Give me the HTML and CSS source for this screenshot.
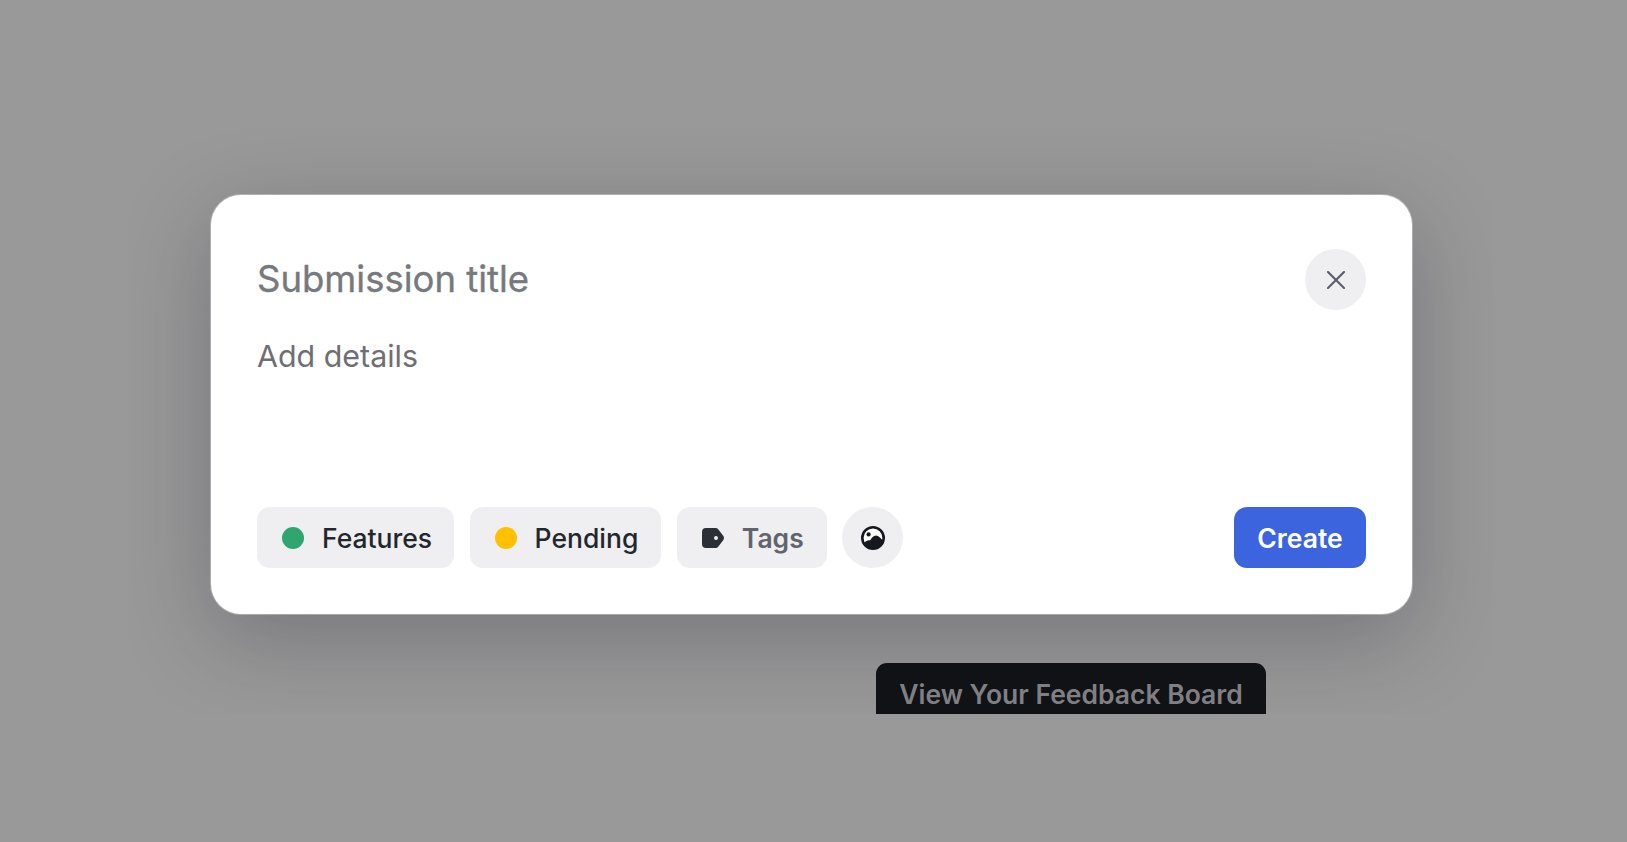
FILE: index.html
```html
<!DOCTYPE html>
<html lang="en">
<head>
<meta charset="utf-8">
<title>Create submission</title>
<link rel="stylesheet" href="styles.css">
</head>
<body>
<div class="overlay">
  <section class="modal">
    <header class="modal-head">
      <h1 class="title">Submission title</h1>
      <button class="close" aria-label="Close">
        <svg width="18" height="18" viewBox="0 0 18 18" fill="none" stroke="#5a5d66" stroke-width="2.100" stroke-linecap="round"><path d="M1 1 17 17M17 1 1 17"/></svg>
      </button>
    </header>
    <p class="details">Add details</p>
    <footer class="modal-foot">
      <div class="chips">
        <button class="chip chip-tight"><span class="dot dot-green"></span><span class="chip-label">Features</span></button>
        <button class="chip"><span class="dot dot-yellow"></span><span class="chip-label">Pending</span></button>
        <button class="chip"><svg class="tag-icon" width="22" height="20" viewBox="0 0 22 20"><path fill="#2c2f36" fill-rule="evenodd" d="M4 0h9.500a3.500 3.500 0 0 1 2.700 1.200l4.800 6.300a4 4 0 0 1 0 5l-4.800 6.300a3.500 3.500 0 0 1-2.700 1.200H4a4 4 0 0 1-4-4V4a4 4 0 0 1 4-4ZM14 8a2 2 0 1 0 0 4 2 2 0 0 0 0-4Z"/></svg><span class="chip-label muted">Tags</span></button>
        <button class="image-btn" aria-label="Add image">
          <svg width="24" height="24" viewBox="0 0 24 24"><circle cx="12" cy="12" r="10.700" fill="#fff" stroke="#16181d" stroke-width="2.600"/><path fill="#16181d" d="M3 17C5 15 7 14 9 14.500 10.500 12 12.500 9.500 15 9.500 17.500 9.500 20 12 22 15 21 20 17 23 12 23 8 23 4.500 21 3 17Z"/><circle cx="7.600" cy="8.400" r="2.100" fill="#16181d"/></svg>
        </button>
      </div>
      <button class="create">Create</button>
    </footer>
  </section>
  <div class="board-clip"><a class="board-tip">View Your Feedback Board</a></div>
</div>
</body>
</html>
```

FILE: styles.css
```css
* { box-sizing: border-box; }
html, body { margin: 0; height: 100%; }
body {
  background: #999999;
  font-family: Inter, "Liberation Sans", sans-serif;
  overflow: hidden;
}
button { font-family: inherit; border: 0; padding: 0; cursor: pointer; }
.overlay {
  height: 842px;
  padding: 195px 215px 0 211px;
  position: relative;
}
.board-clip {
  position: absolute;
  left: 876px;
  top: 663px;
  width: 390px;
  height: 51px;
  overflow: hidden;
}
.board-tip {
  display: block;
  height: 70px;
  padding-top: 16px;
  background: #111216;
  border-radius: 11px;
  color: #808084;
  font-size: 26.500px;
  font-weight: 600;
  line-height: 30px;
  text-align: center;
}
.modal {
  width: 1201px;
  height: 419px;
  background: #fff;
  border-radius: 30px;
  padding: 54px 46px 46px;
  display: flex;
  flex-direction: column;
  box-shadow: 0 0 0 1px rgba(255, 255, 255, 0.3), 0 24px 90px rgba(30, 30, 45, 0.28);
  clip-path: inset(-67px -83px -100px -83px);
}
.modal-head {
  display: flex;
  align-items: center;
  justify-content: space-between;
  height: 61px;
}
.title {
  margin: -2px 0 0;
  font-size: 36.500px;
  font-weight: 400;
  color: #76797d;
  -webkit-text-stroke: 0.35px #76797d;
  line-height: 44px;
}
.close {
  width: 61px;
  height: 61px;
  border-radius: 50%;
  background: #efeff1;
  display: flex;
  align-items: center;
  justify-content: center;
}
.details {
  margin: 27px 0 0;
  font-size: 30.400px;
  line-height: 38px;
  color: #6d6f75;
}
.modal-foot {
  margin-top: auto;
  display: flex;
  justify-content: space-between;
  align-items: center;
}
.chips { display: flex; gap: 15.500px; }
.chip {
  height: 61px;
  padding: 0 23px 0 25px;
  border-radius: 13px;
  background: #efeff1;
  display: flex;
  align-items: center;
  gap: 18px;
}
.chip-tight { padding-right: 22px; }
.chip-label {
  font-size: 26.500px;
  font-weight: 500;
  color: #24262d;
}
.chip-label.muted { color: #62646d; font-weight: 600; }
.dot { width: 22px; height: 22px; border-radius: 50%; }
.dot-green { background: #2fa56f; }
.dot-yellow { background: #ffc000; }
.image-btn {
  width: 61px;
  height: 61px;
  border-radius: 50%;
  background: #efeff1;
  display: flex;
  align-items: center;
  justify-content: center;
}
.create {
  height: 61px;
  width: 132px;
  border-radius: 13px;
  background: #3c64df;
  color: #fff;
  font-size: 26.500px;
  font-weight: 600;
}
```
